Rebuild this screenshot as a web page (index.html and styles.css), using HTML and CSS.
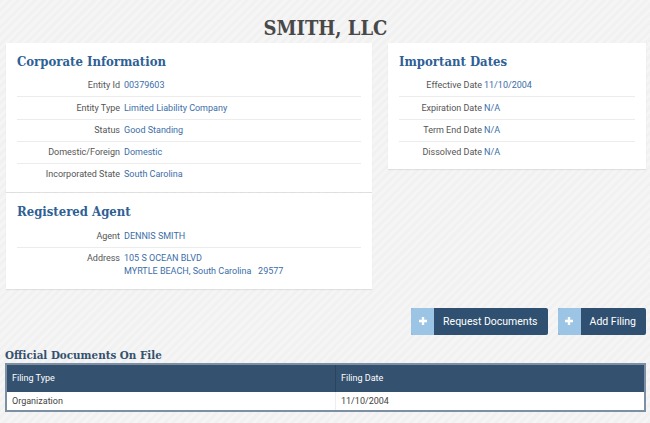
FILE: index.html
```html
<!DOCTYPE html>
<html>
<head>
<meta charset="utf-8">
<link rel="stylesheet" href="styles.css">
</head>
<body>
<div class="page">
  <h1 class="title">SMITH, LLC</h1>
  <div class="grid">
    <div class="col">
      <section class="card">
        <h2 class="card-title">Corporate Information</h2>
        <div class="row"><span class="lbl">Entity Id</span><span class="val">00379603</span></div>
        <div class="row"><span class="lbl">Entity Type</span><span class="val">Limited Liability Company</span></div>
        <div class="row"><span class="lbl">Status</span><span class="val">Good Standing</span></div>
        <div class="row"><span class="lbl">Domestic/Foreign</span><span class="val">Domestic</span></div>
        <div class="row"><span class="lbl">Incorporated State</span><span class="val">South Carolina</span></div>
      </section>
      <section class="card">
        <h2 class="card-title">Registered Agent</h2>
        <div class="row"><span class="lbl">Agent</span><span class="val">DENNIS SMITH</span></div>
        <div class="row"><span class="lbl">Address</span><span class="val">105 S OCEAN BLVD<br>MYRTLE BEACH, South Carolina &nbsp; 29577</span></div>
      </section>
    </div>
    <div class="col">
      <section class="card dates">
        <h2 class="card-title">Important Dates</h2>
        <div class="row"><span class="lbl">Effective Date</span><span class="val">11/10/2004</span></div>
        <div class="row"><span class="lbl">Expiration Date</span><span class="val">N/A</span></div>
        <div class="row"><span class="lbl">Term End Date</span><span class="val">N/A</span></div>
        <div class="row"><span class="lbl">Dissolved Date</span><span class="val">N/A</span></div>
      </section>
    </div>
  </div>
  <div class="actions">
    <button class="btn"><span class="btn-icon"><svg width="10" height="10" viewBox="0 0 10 10"><path d="M5 1v8M1 5h8" stroke="#fff" stroke-width="2.4" fill="none"/></svg></span><span class="btn-text">Request Documents</span></button>
    <button class="btn"><span class="btn-icon"><svg width="10" height="10" viewBox="0 0 10 10"><path d="M5 1v8M1 5h8" stroke="#fff" stroke-width="2.4" fill="none"/></svg></span><span class="btn-text">Add Filing</span></button>
  </div>
  <h3 class="docs-title">Official Documents On File</h3>
  <table class="docs">
    <thead><tr><th>Filing Type</th><th>Filing Date</th></tr></thead>
    <tbody><tr><td>Organization</td><td>11/10/2004</td></tr></tbody>
  </table>
</div>
</body>
</html>
```
FILE: styles.css
```css
html, body { margin: 0; padding: 0; }
body {
  background: repeating-linear-gradient(-45deg, #f1f1f1 0, #f1f1f1 3px, #f5f5f5 3px, #f5f5f5 6px);
  font-family: Roboto, "Liberation Sans", sans-serif;
  color: #555;
  height: 423px;
  overflow: hidden;
}
.page { padding: 0 4px 0 5px; }
.title {
  margin: 0;
  padding-top: 15px;
  height: 28px;
  line-height: 26px;
  text-align: center;
  font-family: "DejaVu Serif", "Liberation Serif", serif;
  font-stretch: condensed;
  font-weight: bold;
  font-size: 20px;
  color: #484848;
}
.grid {
  display: grid;
  grid-template-columns: 366px 258px;
  column-gap: 16px;
  align-items: start;
  padding-left: 1px;
}
.col { display: flex; flex-direction: column; gap: 1px; }
.card {
  background: #fff;
  padding: 10px 11px 7px 11px;
  box-shadow: 0 1px 1px rgba(0,0,0,0.08);
}
.card-title {
  margin: 0 0 4px 0;
  height: 18px;
  line-height: 18px;
  font-family: "DejaVu Serif", "Liberation Serif", serif;
  font-stretch: condensed;
  font-weight: bold;
  font-size: 13px;
  color: #2f5f95;
}
.row {
  display: grid;
  grid-template-columns: 103px 1fr;
  column-gap: 4px;
  padding: 4.3px 0;
  line-height: 12.7px;
  font-size: 9px;
  border-bottom: 1px solid #ececec;
}
.row:last-child { border-bottom: none; }
.lbl { text-align: right; color: #555; }
.val { color: #3b6ea8; }
.dates { padding-bottom: 6px; }
.dates .row { grid-template-columns: 83px 1fr; column-gap: 2px; }
.actions {
  display: flex;
  justify-content: flex-end;
  gap: 10px;
  margin-top: 19px;
}
.btn {
  display: flex;
  align-items: stretch;
  height: 27px;
  padding: 0;
  border: none;
  border-radius: 2px;
  overflow: hidden;
  background: #2f5070;
  font-family: Roboto, "Liberation Sans", sans-serif;
  font-size: 10.5px;
  color: #fff;
}
.btn-icon {
  width: 23px;
  background: #9cc4e4;
  display: flex;
  align-items: center;
  justify-content: center;
}
.btn-text {
  display: flex;
  align-items: center;
  padding: 0 10px 0 9px;
}
.docs-title {
  margin: 12px 0 0 0;
  height: 16px;
  line-height: 16px;
  font-family: "DejaVu Serif", "Liberation Serif", serif;
  font-stretch: condensed;
  font-weight: bold;
  font-size: 11.5px;
  color: #34506f;
}
.docs {
  width: 100%;
  border-collapse: collapse;
  border: 2px solid #7d8fa3;
  font-size: 9px;
}
.docs th {
  background: #34516f;
  color: #fff;
  font-weight: normal;
  text-align: left;
  height: 27px;
  padding: 0 5px;
  border-right: 1px solid #2a4460;
}
.docs th:last-child { border-right: none; }
.docs td {
  background: #fff;
  color: #444;
  height: 18px;
  padding: 0 5px;
  border-right: 1px solid #eeeeee;
}
.docs td:last-child { border-right: none; }
.docs th:first-child, .docs td:first-child { width: 318px; }
```
